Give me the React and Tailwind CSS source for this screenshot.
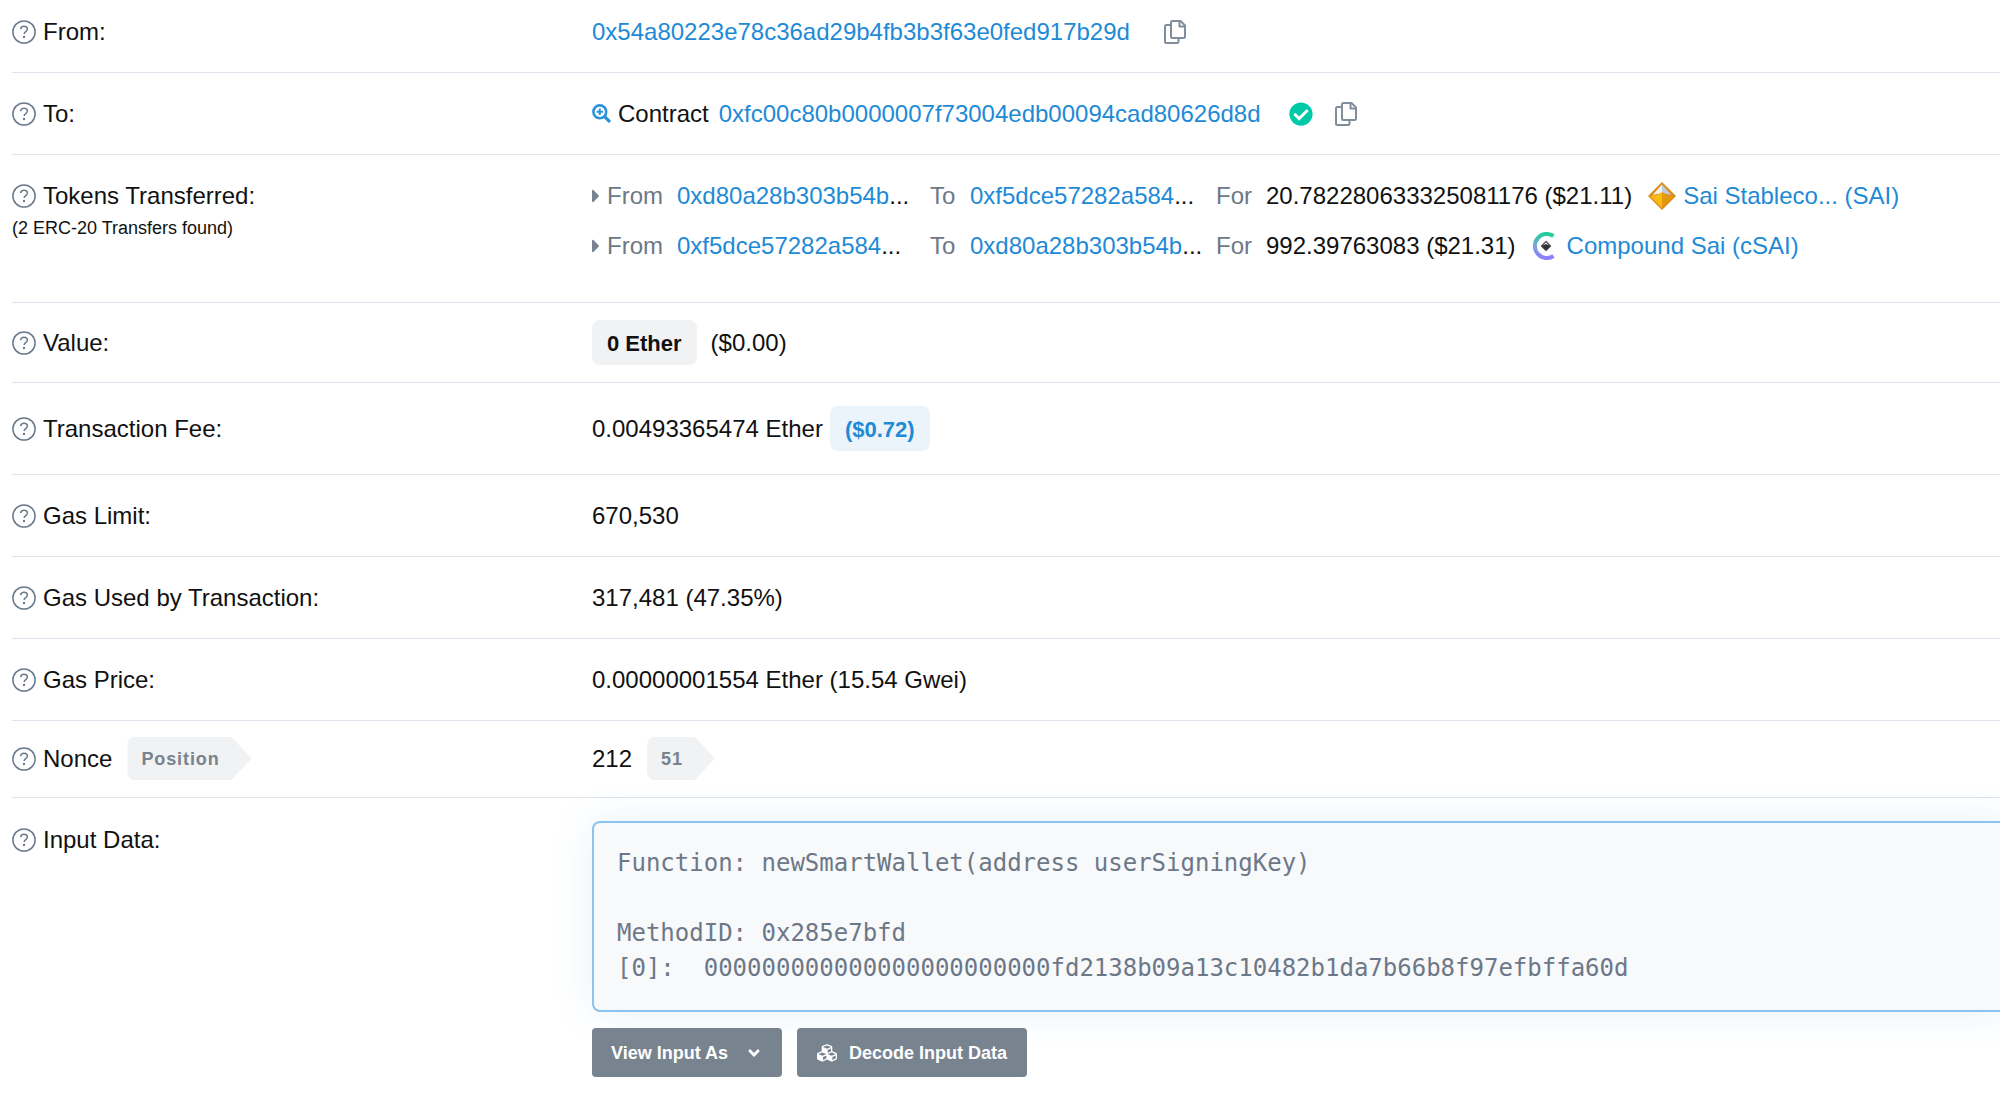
import { FaAngleDown, FaCaretRight, FaCheckCircle, FaCubes } from 'react-icons/fa';

const INPUT_DATA = `Function: newSmartWallet(address userSigningKey)

MethodID: 0x285e7bfd
[0]:  000000000000000000000000fd2138b09a13c10482b1da7b66b8f97efbffa60d`;

const TRANSFERS = [
  {
    from: '0xd80a28b303b54b',
    to: '0xf5dce57282a584',
    amount: '20.782280633325081176 ($21.11)',
    token: 'Sai Stableco... (SAI)',
    Logo: SaiLogo,
  },
  {
    from: '0xf5dce57282a584',
    to: '0xd80a28b303b54b',
    amount: '992.39763083 ($21.31)',
    token: 'Compound Sai (cSAI)',
    Logo: CompoundLogo,
  },
];

function HelpIcon() {
  return (
    <svg className="size-6 shrink-0" viewBox="0 0 24 24" fill="none" stroke="#6b7a8c" strokeWidth="1.5">
      <circle cx="12" cy="12" r="11.1" />
      <path d="M8.6 9.2C8.8 7.3 10.2 6.3 12 6.3c2 0 3.4 1.1 3.4 2.8 0 2.5-3.3 2.5-3.3 4.9" />
      <circle cx="12" cy="17" r="1.2" fill="#6b7a8c" stroke="none" />
    </svg>
  );
}

function CopyButton() {
  return (
    <button type="button" aria-label="Copy address" className="cursor-pointer text-[#808d9b]">
      <svg className="h-6 w-[22px]" viewBox="0 0 22 24" fill="none" stroke="currentColor" strokeWidth="2" strokeLinejoin="round">
        <path d="M8.5 1h8L21 5.5v11a1.500 1.500 0 0 1-1.500 1.500h-11A1.500 1.500 0 0 1 7 16.500v-14A1.500 1.500 0 0 1 8.500 1z" />
        <path d="M15.500 1v5.500H21" />
        <path d="M7 5H2.500A1.500 1.500 0 0 0 1 6.500v15A1.500 1.500 0 0 0 2.500 23h10.500a1.500 1.500 0 0 0 1.500-1.500V18" />
      </svg>
    </button>
  );
}

function ZoomIcon() {
  return (
    <svg className="size-[19px] shrink-0" viewBox="0 0 19 19" fill="none" stroke="#2b93da">
      <circle cx="7.8" cy="7.8" r="6.4" strokeWidth="2.6" />
      <path d="M12.600 12.600L18 18" strokeWidth="3.2" />
      <path d="M7.800 4.600v6.400M4.600 7.800H11" strokeWidth="2" />
    </svg>
  );
}

function SaiLogo() {
  return (
    <svg className="size-7 shrink-0" viewBox="0 0 28 28">
      <path d="M14 0L28 14 14 28 0 14z" fill="#d98c1a" />
      <path d="M14 2.500L4.500 13 14 11z" fill="#f3f1ee" />
      <path d="M14 2.500L23.500 13 14 11z" fill="#c3cbd8" />
      <path d="M2 14L9 13l5-3v16z" fill="#fdb913" />
      <path d="M26 14l-7-1-5-3v16z" fill="#e09a0c" />
    </svg>
  );
}

function CompoundLogo() {
  return (
    <svg className="size-7 shrink-0" viewBox="0 0 28 28" fill="none">
      <defs>
        <linearGradient id="compound" x1="0" y1="0" x2="0" y2="1">
          <stop offset="0" stopColor="#1fcf9a" />
          <stop offset="0.5" stopColor="#7fa3e0" />
          <stop offset="1" stopColor="#8f7dff" />
        </linearGradient>
      </defs>
      <path d="M21.500 4A12 12 0 1 0 21.500 24" stroke="url(#compound)" strokeWidth="4" />
      <path d="M14 9.500L18.500 14 14 18.500 9.500 14z" stroke="#444" strokeWidth="1.200" />
      <path d="M9.500 14l4.500-2 4.500 2-4.500 4.500z" fill="#333" />
    </svg>
  );
}

function Row({ label, note, extra, className = 'py-[26px]', children }) {
  return (
    <div className={`grid grid-cols-[580px_1fr] border-b border-[#dfe4ee] ${className}`}>
      <div>
        <div className="flex items-center gap-[7px]">
          <HelpIcon />
          <span>{label}</span>
          {extra}
        </div>
        {note && <p className="mt-1 text-lg leading-[29px]">{note}</p>}
      </div>
      <div className="min-w-0">{children}</div>
    </div>
  );
}

function ArrowBadge({ children }) {
  return (
    <span className="ml-2 flex h-[43px] items-center rounded-l-lg bg-[#f1f2f4] pr-8 pl-[14px] text-lg font-bold tracking-wider text-[#77838f] [clip-path:polygon(0_0,calc(100%-20px)_0,100%_50%,calc(100%-20px)_100%,0_100%)]">
      {children}
    </span>
  );
}

function App() {
  return (
    <main className="overflow-x-hidden bg-white pl-3 font-['Liberation_Sans',Arial,sans-serif] text-2xl leading-[29px] text-[#111]">
      <Row label="From:" className="pt-[17px] pb-[26px]">
        <div className="flex items-center gap-[34px]">
          <a href="#from" className="text-[#1e8ad6]">0x54a80223e78c36ad29b4fb3b3f63e0fed917b29d</a>
          <CopyButton />
        </div>
      </Row>

      <Row label="To:">
        <div className="flex items-center">
          <ZoomIcon />
          <span className="ml-[7px]">Contract</span>
          <a href="#to" className="ml-[10px] text-[#1e8ad6]">0xfc00c80b0000007f73004edb00094cad80626d8d</a>
          <FaCheckCircle className="mr-[22px] ml-7 size-6 text-[#00c9a7]" />
          <CopyButton />
        </div>
      </Row>

      <Row label="Tokens Transferred:" note="(2 ERC-20 Transfers found)" className="pt-[26px] pb-[42px]">
        <ul className="flex flex-col gap-[21px]">
          {TRANSFERS.map(({ from, to, amount, token, Logo }) => (
            <li key={token} className="flex items-center whitespace-nowrap">
              <FaCaretRight className="h-6 w-2 text-[#77838f]" />
              <span className="ml-[7px] w-[70px] text-[#6c7887]">From</span>
              <span className="w-[253px]"><a href={`#${from}`} className="text-[#1e8ad6]">{from}</a>...</span>
              <span className="w-10 text-[#6c7887]">To</span>
              <span className="w-[246px]"><a href={`#${to}`} className="text-[#1e8ad6]">{to}</a>...</span>
              <span className="w-[50px] text-[#6c7887]">For</span>
              <span className="mr-4">{amount}</span>
              <Logo />
              <a href={`#${token}`} className="ml-[7px] text-[#1e8ad6]">{token}</a>
            </li>
          ))}
        </ul>
      </Row>

      <Row label="Value:" className="items-center py-[17px]">
        <div className="flex items-center gap-[14px]">
          <span className="rounded-lg bg-[#f1f2f4] px-[15px] pt-[9px] pb-[7px] text-[22px] leading-[29px] font-bold">0 Ether</span>
          ($0.00)
        </div>
      </Row>

      <Row label="Transaction Fee:" className="items-center py-[23px]">
        <div className="flex items-center gap-[7px]">
          0.00493365474 Ether
          <span className="rounded-lg bg-[#ebf4fb] px-[15px] pt-[9px] pb-[7px] text-[22px] leading-[29px] font-bold text-[#1e8ad6]">($0.72)</span>
        </div>
      </Row>

      <Row label="Gas Limit:">670,530</Row>
      <Row label="Gas Used by Transaction:">317,481 (47.35%)</Row>
      <Row label="Gas Price:">0.00000001554 Ether (15.54 Gwei)</Row>

      <Row label="Nonce" extra={<ArrowBadge>Position</ArrowBadge>} className="items-center pt-4 pb-[17px]">
        <div className="flex items-center gap-[7px]">
          212
          <ArrowBadge>51</ArrowBadge>
        </div>
      </Row>

      <div className="grid grid-cols-[580px_1fr] pt-[23px]">
        <label htmlFor="input-data" className="flex items-center gap-[7px] self-start pt-1">
          <HelpIcon />
          Input Data:
        </label>
        <div className="min-w-0">
          <textarea
            id="input-data"
            readOnly
            rows={4}
            value={INPUT_DATA}
            className="block w-[calc(100%+12px)] resize-none overflow-hidden rounded-lg border-2 border-[#8cc3ee] bg-[#f8f9fb] px-[23px] pt-[23px] pb-6 font-['DejaVu_Sans_Mono',monospace] text-2xl leading-[35px] text-[#6c7887] shadow-[0_0_40px_rgba(52,152,219,0.12)] outline-none"
          />
          <div className="relative mt-4 flex gap-[15px] text-lg font-bold text-white">
            <button type="button" className="flex h-[49px] cursor-pointer items-center gap-[17px] rounded-sm bg-[#77838f] px-[19px]">
              View Input As
              <FaAngleDown className="size-[18px]" />
            </button>
            <button type="button" className="flex h-[49px] cursor-pointer items-center gap-3 rounded-sm bg-[#77838f] px-5">
              <FaCubes className="size-5" />
              Decode Input Data
            </button>
          </div>
        </div>
      </div>
    </main>
  );
}

export default App;
